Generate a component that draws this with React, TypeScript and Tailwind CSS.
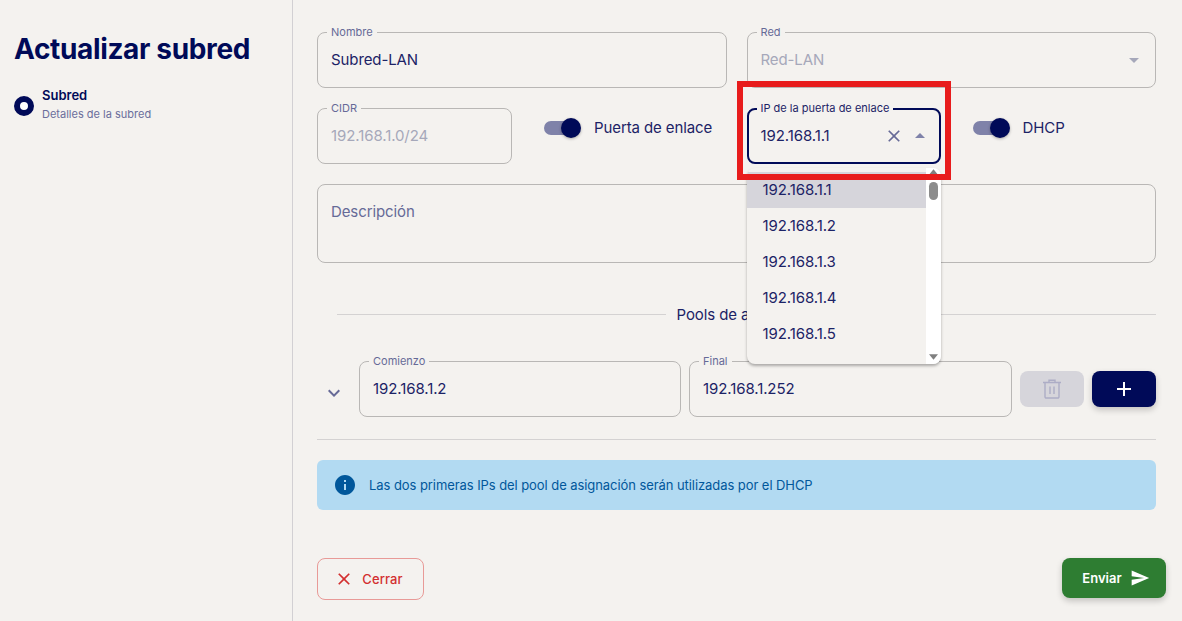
import React from "react";

const P = {
  close: "M19 6.41 17.59 5 12 10.59 6.41 5 5 6.41 10.59 12 5 17.59 6.41 19 12 13.41 17.59 19 19 17.59 13.41 12z",
  up: "M7 14l5-5 5 5z",
  down: "M7 10l5 5 5-5z",
  info: "M12 2C6.48 2 2 6.48 2 12s4.48 10 10 10 10-4.48 10-10S17.52 2 12 2zm1 15h-2v-6h2v6zm0-8h-2V7h2v2z",
  send: "M2.01 21 23 12 2.01 3 2 10l15 2-15 2z",
  chevron: "M7.41 8.59 12 13.17l4.59-4.58L18 10l-6 6-6-6 1.41-1.41z",
  add: "M19 13h-6v6h-2v-6H5v-2h6V5h2v6h6v2z",
};

function Icon({ d, className }: { d: string; className: string }) {
  return (
    <svg viewBox="0 0 24 24" fill="currentColor" className={className}>
      <path d={d} />
    </svg>
  );
}

function Field({
  label,
  value,
  disabled,
  className,
  children,
}: {
  label: string;
  value: string;
  disabled?: boolean;
  className?: string;
  children?: React.ReactNode;
}) {
  return (
    <div className={`relative h-14 rounded-lg border border-[#b9b7b5] flex items-center pl-[13px] pr-2 ${className ?? ""}`}>
      <span className="absolute -top-[9px] left-[9px] bg-[#f4f2ef] px-[4px] text-[11px] leading-4 text-[#666a97]">
        {label}
      </span>
      <span className={`text-[15px] tracking-[-0.1px] leading-5 -mt-[1px] ${disabled ? "text-[#a6a8ba]" : "text-[#1c2366]"}`}>{value}</span>
      {children}
    </div>
  );
}

function Toggle({ label }: { label: string }) {
  return (
    <div className="flex items-center ml-8 mb-[16px]">
      <div className="relative w-[37px] h-[22px] flex items-center">
        <div className="w-[34px] h-[14px] rounded-full bg-[#7f82a9]" />
        <div className="absolute right-0 top-0 w-[20px] h-[20px] mt-[1px] rounded-full bg-[#000a58] shadow-[0_1px_3px_rgba(0,0,0,0.3)]" />
      </div>
      <span className="ml-[13px] text-[15px] tracking-[-0.1px] text-[#1c2366]">{label}</span>
    </div>
  );
}

function Dropdown() {
  const items = ["192.168.1.1", "192.168.1.2", "192.168.1.3", "192.168.1.4", "192.168.1.5"];
  return (
    <div className="absolute z-10 left-0 top-[60px] w-[194px] h-[196px] rounded-lg overflow-hidden bg-[#f4f2ef] shadow-[0_2px_3px_rgba(0,0,0,0.3)] pt-1 pr-[14px]">
      {items.map((t, i) => (
        <div
          key={t}
          className={`h-9 flex items-center pl-4 pt-px text-[15px] tracking-[-0.1px] text-[#1c2366] ${i === 0 ? "bg-[#d6d5db]" : ""}`}
        >
          {t}
        </div>
      ))}
      <div className="absolute right-0 top-0 bottom-0 w-[15px] bg-white">
        <div className="absolute left-[3px] top-[14px] w-[9px] h-[18px] rounded-full bg-[#8c8c8c]" />
        <svg viewBox="0 0 10 6" className="absolute left-[3px] bottom-[4px] w-[9px] h-[6px] text-[#808080]" fill="currentColor">
          <path d="M0 0h10L5 6z" />
        </svg>
        <svg viewBox="0 0 10 6" className="absolute left-[3px] top-[1px] w-[9px] h-[6px] text-[#808080]" fill="currentColor">
          <path d="M0 6h10L5 0z" />
        </svg>
      </div>
    </div>
  );
}

export default function App() {
  return (
    <div className="flex h-[621px] w-[1182px] overflow-hidden bg-[#f4f2ef] font-['Inter',sans-serif]">
      <aside className="w-[293px] shrink-0 border-r border-[#d2d0d3] pl-[14px] pt-[32px]">
        <h1 className="text-[28px] leading-[34px] tracking-[-0.35px] font-bold text-[#000a58]">Actualizar subred</h1>
        <div className="flex items-center mt-[20px]">
          <div className="w-5 h-5 rounded-full border-[6px] border-[#000a58] bg-white mt-[2px]" />
          <div className="ml-2">
            <div className="text-[13px] leading-[18px] font-semibold text-[#000a58]">Subred</div>
            <div className="text-[11px] leading-[18px] mt-px text-[#6a6e9b]">Detalles de la subred</div>
          </div>
        </div>
      </aside>

      <main className="flex-1 pl-6 pr-[26px] pt-[32px] flex flex-col">
        <div className="grid grid-cols-2 gap-x-5">
          <Field label="Nombre" value="Subred-LAN" />
          <Field label="Red" value="Red-LAN" disabled className="border-[#8d8fac]">
            <Icon d={P.down} className="ml-auto w-6 h-6 text-[#a6a8ba] mr-[1px]" />
          </Field>
        </div>

        <div className="grid grid-cols-2 gap-x-5 mt-5">
          <div className="flex items-center">
            <Field label="CIDR" value="192.168.1.0/24" disabled className="w-[195px] border-[#8d8fac]" />
            <Toggle label="Puerta de enlace" />
          </div>
          <div className="flex items-center">
            <div className="relative w-[194px] h-14 rounded-lg border-2 border-[#000a58] flex items-center pl-3 pr-[7px]">
              <span className="absolute -top-[10px] left-[8px] bg-[#f4f2ef] px-[4px] text-[11px] leading-4 text-[#1c2366] whitespace-nowrap">
                IP de la puerta de enlace
              </span>
              <span className="text-[15px] tracking-[-0.1px] text-[#1c2366]">192.168.1.1</span>
              <Icon d={P.close} className="ml-auto w-[20px] h-[20px] text-[#666a97]" />
              <Icon d={P.up} className="w-6 h-6 text-[#7f82a9] ml-[4px]" />
              <div className="absolute -left-[2px] -top-[2px]">
                <Dropdown />
              </div>
              <div className="absolute z-20 -left-[12px] -right-[12px] -top-[29px] -bottom-[18px] border-[6px] border-[#e81c1c] pointer-events-none" />
            </div>
            <Toggle label="DHCP" />
          </div>
        </div>

        <div className="mt-5 h-[79px] rounded-lg border border-[#b9b7b5] px-[13px] pt-[14px]">
          <span className="text-[15px] tracking-[-0.1px] text-[#666a97]">Descripción</span>
        </div>

        <div className="flex items-center mt-[41px] ml-5 h-5">
          <div className="flex-1 h-px bg-[#d4d2d2]" />
          <span className="px-[10px] mt-[2px] text-[15px] tracking-[-0.1px] leading-5 text-[#1c2366]">Pools de asignación</span>
          <div className="flex-1 h-px bg-[#d4d2d2]" />
        </div>

        <div className="flex items-start mt-[37px]">
          <div className="w-[42px] h-14 flex items-center justify-start pl-[5px] pt-[8px] shrink-0">
            <Icon d={P.chevron} className="w-[24px] h-[24px] text-[#666a97]" />
          </div>
          <Field label="Comienzo" value="192.168.1.2" className="w-[322px]" />
          <Field label="Final" value="192.168.1.252" className="w-[323px] ml-2" />
          <div className="ml-2 mt-[10px] w-16 h-9 rounded-lg bg-[#d6d5db] flex items-center justify-center">
            <svg viewBox="0 0 24 24" fill="none" stroke="#adadc6" strokeWidth="1.4" className="w-6 h-6">
              <path d="M3 5.5h18M9 5.5V3.2h6v2.3M5 5.5v14.3a1.2 1.2 0 0 0 1.2 1.2h11.6a1.2 1.2 0 0 0 1.2-1.2V5.5M10 9.5v7.5M14 9.5v7.5" />
            </svg>
          </div>
          <div className="ml-2 mt-[10px] w-16 h-9 rounded-lg bg-[#000a58] flex items-center justify-center shadow-[0_3px_6px_rgba(0,0,0,0.2)]">
            <Icon d={P.add} className="w-[24px] h-[24px] text-white" />
          </div>
        </div>

        <div className="mt-[22px] h-px bg-[#d4d2d2]" />

        <div className="mt-5 h-[50px] rounded-md bg-[#b2daf2] flex items-center pl-4 text-[#01579b]">
          <Icon d={P.info} className="w-6 h-6 shrink-0" />
          <span className="ml-[12px] mt-px text-[13px] tracking-[-0.07px]">
            Las dos primeras IPs del pool de asignación serán utilizadas por el DHCP
          </span>
        </div>

        <div className="flex justify-between items-start mt-12 -mr-[10px]">
          <div className="w-[107px] h-[42px] rounded-lg border border-[#e89a97] flex items-center justify-center pr-1 text-[#d32f2f]">
            <Icon d={P.close} className="w-5 h-5" />
            <span className="ml-[8px] mt-[2px] text-[13px] tracking-[0.1px] font-medium">Cerrar</span>
          </div>
          <div className="w-[104px] h-10 rounded-lg bg-[#2e7d32] flex items-center justify-center pl-1 text-white shadow-[0_3px_6px_rgba(0,0,0,0.2)]">
            <span className="text-[13px] mt-[2px] font-semibold">Enviar</span>
            <Icon d={P.send} className="w-5 h-5 ml-2" />
          </div>
        </div>
      </main>
    </div>
  );
}
